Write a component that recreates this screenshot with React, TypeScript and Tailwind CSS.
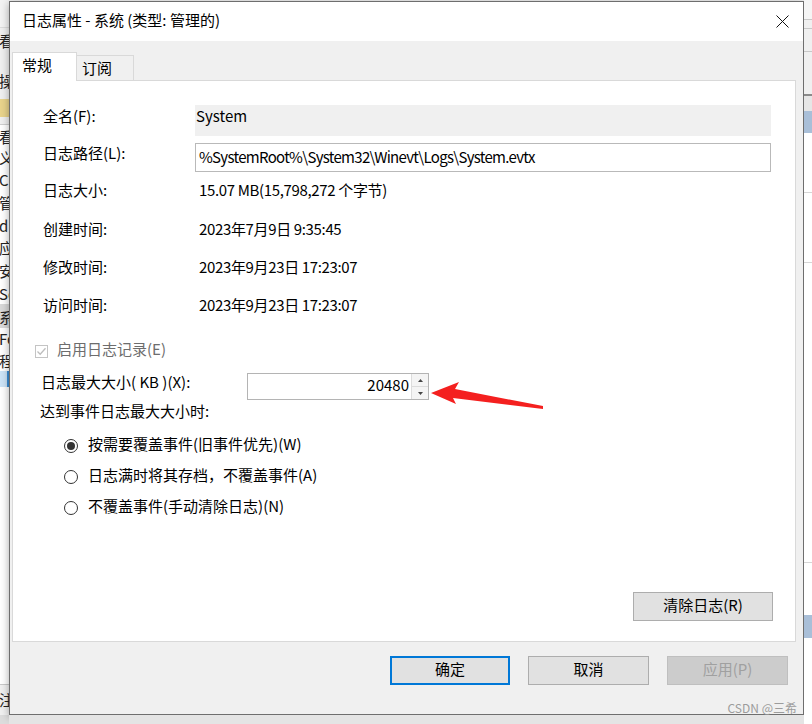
import React from "react";

const font = { fontFamily: '"Noto Sans CJK SC", "Noto Sans", sans-serif' };

const leftRows: { h: number; text?: string; cls?: string }[] = [
  { h: 28, cls: "bg-[#f3f3f3] border-b border-[#dcdcdc]" },
  { h: 24, text: "看", cls: "bg-[#f0f0f0] text-[#8a8a8a]" },
  { h: 17, cls: "bg-[#f0f0f0]" },
  { h: 22, text: "操", cls: "bg-[#f0f0f0]" },
  { h: 8, cls: "bg-[#f0f0f0]" },
  { h: 18, cls: "bg-[#e9d48c]" },
  { h: 8, cls: "bg-[#f0f0f0] border-b border-[#cfcfcf]" },
  { h: 22, text: "看" },
  { h: 21, text: "义" },
  { h: 23, text: "Ci" },
  { h: 23, text: "管" },
  { h: 22, text: "d" },
  { h: 23, text: "应" },
  { h: 23, text: "安" },
  { h: 22, text: "Se" },
  { h: 24, text: "系", cls: "bg-[#d9d9d9]" },
  { h: 21, text: "Fo" },
  { h: 22, text: "程" },
  { h: 16, cls: "bg-[#cde4f7] border-r-2 border-[#3c8fd6]" },
];

function LeftStrip() {
  return (
    <div className="flex w-[9px] shrink-0 flex-col overflow-hidden bg-white">
      {leftRows.map((r, i) => (
        <div
          key={i}
          className={`flex shrink-0 items-center overflow-hidden whitespace-nowrap text-[15px] leading-none text-[#222] ${r.cls ?? ""}`}
          style={{ height: r.h }}
        >
          {r.text ? <span className="-ml-px">{r.text}</span> : null}
        </div>
      ))}
      <div className="flex-1 border-b border-[#c9c9c9]" />
      <div className="flex h-[30px] shrink-0 items-center overflow-hidden bg-[#f0f0f0] text-[15px] text-[#222]">
        <span className="-ml-px">注</span>
      </div>
      <div className="h-[9px] shrink-0 bg-[#dcdcdc]" />
    </div>
  );
}

function RightStrip() {
  return (
    <div className="flex w-[9px] shrink-0 flex-col bg-[#f0f0f0]">
      <div className="h-[20px] border-b border-[#c8c8c8] bg-[#f5f5f5]" />
      <div className="h-[9px] border-b border-[#c8c8c8]" />
      <div className="h-[23px] border-b border-[#c8c8c8]" />
      <div className="h-[15px]" />
      <div className="h-[29px] border-b-2 border-[#8a8a8a]" />
      <div className="h-[15px] bg-[#e6e6e6]" />
      <div className="h-[22px] bg-[#a9bfd8]" />
      <div className="h-[60px] border-b border-[#d6d6d6] bg-white" />
      <div className="h-[70px] border-b border-[#d6d6d6] bg-white" />
      <div className="h-[300px] border-b border-[#d6d6d6] bg-white" />
      <div className="h-[52px] bg-white" />
      <div className="h-[23px] bg-[#a9bfd8]" />
      <div className="flex-1 bg-white" />
    </div>
  );
}

function Row({ label, value, h }: { label: string; value: string; h: number }) {
  return (
    <div className="flex items-center pb-[3px] pl-[30px]" style={{ height: h }}>
      <div className="w-[152px]">{label}</div>
      <div className="pl-[4px] tracking-[-0.35px]">{value}</div>
    </div>
  );
}

function Radio({ checked, label }: { checked?: boolean; label: string }) {
  return (
    <div className="flex h-[31px] items-center pl-[51px]">
      <span className="flex h-[14px] w-[14px] items-center justify-center rounded-full border border-[#333] bg-white">
        {checked ? <span className="h-[8px] w-[8px] rounded-full bg-[#333]" /> : null}
      </span>
      <span className="mb-[2px] ml-[10px]">{label}</span>
    </div>
  );
}

function GeneralTab() {
  return (
    <div className="relative -mt-px ml-[2px] mr-[7px] flex h-[562px] flex-col border border-[#d9d9d9] bg-white">
      <div className="mt-[24px] flex h-[31px] items-start pl-[30px] leading-[19px]">
        <div className="w-[152px] pt-[1px]">全名(F):</div>
        <div className="h-[31px] w-[576px] bg-[#f0f0f0] pl-[1px] pt-[1px]">System</div>
      </div>
      <div className="mt-[7px] flex h-[29px] items-start pl-[30px] leading-[19px]">
        <div className="w-[152px]">日志路径(L):</div>
        <div className="flex h-[29px] w-[576px] items-center border border-[#b9b9b9] pb-[2px] pl-[3px] tracking-[-0.7px]">
          %SystemRoot%\System32\Winevt\Logs\System.evtx
        </div>
      </div>
      <Row h={39} label="日志大小:" value="15.07 MB(15,798,272 个字节)" />
      <Row h={39} label="创建时间:" value="2023年7月9日 9:35:45" />
      <Row h={38} label="修改时间:" value="2023年9月23日 17:23:07" />
      <Row h={38} label="访问时间:" value="2023年9月23日 17:23:07" />

      <div className="mt-[12px] flex h-[26px] items-center pl-[22px] text-[#6d6d6d]">
        <span className="flex h-[13px] w-[13px] items-center justify-center border border-[#c4c4c4]">
          <svg width="11" height="11" viewBox="0 0 11 11">
            <path d="M1.5 5.5 L4.2 8.2 L9.5 2.2" fill="none" stroke="#bdbdbd" strokeWidth="1.3" />
          </svg>
        </span>
        <span className="mb-[3px] ml-[9px]">启用日志记录(E)</span>
      </div>

      <div className="mt-[9px] flex h-[27px] items-start pl-[28px]">
        <div className="w-[206px] leading-[18px]">日志最大大小( KB )(X):</div>
        <div className="flex h-[27px] w-[182px] border border-[#b4b4b4]">
          <div className="flex flex-1 items-center justify-end pb-[2px] pr-[2px]">20480</div>
          <div className="flex w-[17px] flex-col border-l border-[#dcdcdc]">
            <div className="flex flex-1 items-center justify-center border-b border-[#dcdcdc] bg-[#f4f4f4]">
              <svg width="5" height="3" viewBox="0 0 5 3">
                <path d="M0 3 L2.5 0 L5 3 Z" fill="#444" />
              </svg>
            </div>
            <div className="flex flex-1 items-center justify-center bg-[#f4f4f4]">
              <svg width="5" height="3" viewBox="0 0 5 3">
                <path d="M0 0 L2.5 3 L5 0 Z" fill="#444" />
              </svg>
            </div>
          </div>
        </div>
      </div>

      <div className="mt-px flex h-[22px] items-center pb-[1px] pl-[27px]">达到事件日志最大大小时:</div>

      <div className="mt-[7px] flex flex-col">
        <Radio checked label="按需要覆盖事件(旧事件优先)(W)" />
        <Radio label="日志满时将其存档，不覆盖事件(A)" />
        <Radio label="不覆盖事件(手动清除日志)(N)" />
      </div>

      <button className="mb-[20px] mr-[22px] mt-auto flex h-[29px] w-[140px] items-center justify-center self-end border border-[#adadad] bg-[#e1e1e1] pb-[2px]">
        清除日志(R)
      </button>
    </div>
  );
}

function Dialog() {
  return (
    <div className="flex h-[714px] w-[795px] flex-col border border-[#6e6e6e] bg-[#f0f0f0] shadow-[0_2px_8px_rgba(0,0,0,0.35)]">
      <div className="flex h-[39px] shrink-0 items-center justify-between bg-white pl-[12px] pr-[14px]">
        <span className="mb-[2px]">日志属性 - 系统 (类型: 管理的)</span>
        <svg width="13" height="13" viewBox="0 0 13 13">
          <path d="M0.5 0.5 L12.5 12.5 M12.5 0.5 L0.5 12.5" stroke="#111" strokeWidth="1" />
        </svg>
      </div>

      <div className="mt-[11px] ml-[2px] flex h-[29px] items-end">
        <div className="relative z-10 flex h-[29px] w-[65px] items-center border border-b-0 border-[#d9d9d9] bg-white pb-[3px] pl-[9px]">
          常规
        </div>
        <div className="flex h-[26px] w-[57px] items-center border border-b-0 border-l-0 border-[#d9d9d9] bg-[#f0f0f0] pb-[1px] pl-[5px]">
          订阅
        </div>
      </div>

      <GeneralTab />

      <div className="mt-[14px] flex justify-end gap-[18px] pr-[15px]">
        <button className="flex h-[29px] w-[120px] items-center justify-center border-2 border-[#0078d7] bg-[#e1e1e1] pb-[2px]">
          确定
        </button>
        <button className="flex h-[29px] w-[121px] items-center justify-center border border-[#adadad] bg-[#e1e1e1] pb-[2px]">
          取消
        </button>
        <button className="flex h-[29px] w-[121px] items-center justify-center border border-[#bfbfbf] bg-[#cccccc] pb-[2px] text-[#a0a0a0]">
          应用(P)
        </button>
      </div>
    </div>
  );
}

export default function App() {
  return (
    <div
      className="relative flex h-[724px] w-[812px] overflow-hidden bg-[#f0f0f0] text-[15px] text-black"
      style={font}
    >
      <LeftStrip />
      <div className="flex shrink-0 flex-col">
        <div className="h-px bg-[#f3f3f3]" />
        <Dialog />
        <div className="flex-1 bg-[#e4e4e4]" />
      </div>
      <RightStrip />

      <svg className="absolute left-[425px] top-[378px]" width="122" height="34" viewBox="0 0 122 34">
        <polygon points="6,15 34,4 30,11 118,28 118,31 28,20 31,26" fill="#f4201f" />
      </svg>

      <div className="absolute bottom-[10px] right-[15px] text-[12px] leading-none text-[#9c9c9c]">
        CSDN @三希
      </div>
    </div>
  );
}
